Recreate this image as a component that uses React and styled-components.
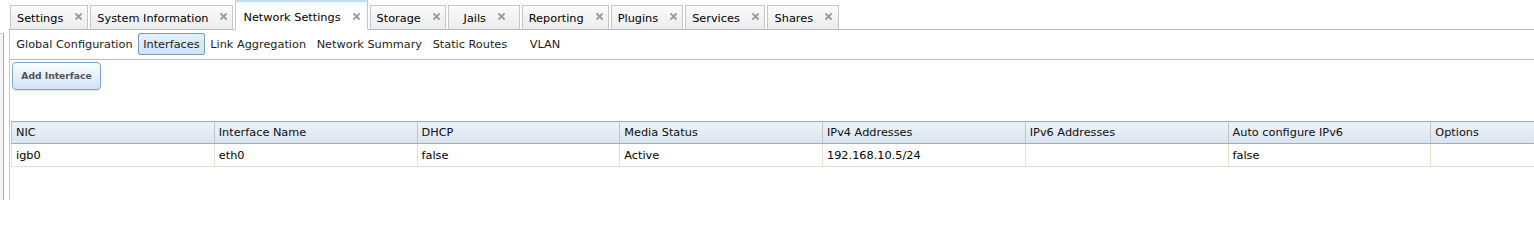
import styled, { createGlobalStyle } from 'styled-components';

const GlobalStyle = createGlobalStyle`
  html, body {
    margin: 0;
    padding: 0;
    background: #fff;
    overflow: hidden;
  }
  body {
    font-family: "DejaVu Sans", Verdana, sans-serif;
    font-size: 11.3px;
    color: #000;
  }
`;

const tabs = [
  'Settings',
  'System Information',
  'Network Settings',
  'Storage',
  'Jails',
  'Reporting',
  'Plugins',
  'Services',
  'Shares',
];

const subTabs = [
  { label: 'Global Configuration' },
  { label: 'Interfaces', active: true },
  { label: 'Link Aggregation' },
  { label: 'Network Summary' },
  { label: 'Static Routes' },
  { label: 'VLAN', offset: 12 },
];

const columns = [
  'NIC',
  'Interface Name',
  'DHCP',
  'Media Status',
  'IPv4 Addresses',
  'IPv6 Addresses',
  'Auto configure IPv6',
  'Options',
];

const rows = [['igb0', 'eth0', 'false', 'Active', '192.168.10.5/24', '', 'false', '']];

const CloseIcon = () => (
  <svg width="7" height="7" viewBox="0 0 7 7">
    <path d="M1 1 L6 6 M6 1 L1 6" stroke="#9a9a9a" strokeWidth="1.8" strokeLinecap="square" />
  </svg>
);

const App = () => {
  return (
    <Root>
      <GlobalStyle />
      <LeftStrip />
      <Main>
        <TabList>
          {tabs.map((t) => (
            <Tab key={t} $active={t === 'Network Settings'}>
              <span>{t}</span>
              <CloseIcon />
            </Tab>
          ))}
        </TabList>
        <Pane>
          <SubTabBar>
            {subTabs.map((s) => (
              <SubTab key={s.label} $active={s.active} $offset={s.offset || 0}>
                {s.label}
              </SubTab>
            ))}
          </SubTabBar>
          <Toolbar>
            <AddButton>Add Interface</AddButton>
          </Toolbar>
          <Grid>
            <colgroup>
              {columns.map((c) => (
                <col key={c} style={{ width: 202.75 }} />
              ))}
            </colgroup>
            <thead>
              <tr>
                {columns.map((c) => (
                  <HeadCell key={c}>{c}</HeadCell>
                ))}
              </tr>
            </thead>
            <tbody>
              {rows.map((r, i) => (
                <tr key={i}>
                  {r.map((v, j) => (
                    <Cell key={j}>{v}</Cell>
                  ))}
                </tr>
              ))}
            </tbody>
          </Grid>
        </Pane>
      </Main>
    </Root>
  );
};

export default App;

const Root = styled.div`
  display: flex;
  height: 200px;
  width: 1534px;
  overflow: hidden;
`;

const LeftStrip = styled.div`
  flex: 0 0 3px;
  margin-top: 33px;
  border-top: 1px solid #cfcfcf;
  border-right: 1px solid #a9a9a9;
  background: #f4f4f4;
`;

const Main = styled.div`
  flex: 1;
  display: flex;
  flex-direction: column;
  margin-left: 5px;
  min-width: 0;
`;

const TabList = styled.div`
  display: flex;
  align-items: flex-end;
  height: 29px;
  padding-left: 1px;
  position: relative;
  z-index: 1;
`;

const Tab = styled.div`
  display: flex;
  align-items: center;
  justify-content: center;
  gap: 12px;
  box-sizing: border-box;
  min-width: 72px;
  height: ${(p) => (p.$active ? '30px' : '24px')};
  margin-right: 2px;
  margin-bottom: ${(p) => (p.$active ? '-1px' : '0')};
  padding: ${(p) => (p.$active ? '5px 7px 0 7px' : '2px 5px 0 6px')};
  border: 1px solid #c6c6c6;
  border-bottom: ${(p) => (p.$active ? '1px solid #fff' : '0')};
  border-top: ${(p) => (p.$active ? '2px solid #c3ddf6' : '1px solid #c6c6c6')};
  background: ${(p) =>
    p.$active
      ? 'linear-gradient(#f3f8fd, #fff 8px)'
      : 'linear-gradient(#fafafa, #ececec)'};
  box-shadow: ${(p) => (p.$active ? 'none' : 'inset 0 1px 0 #fff')};
  white-space: nowrap;

  span {
    line-height: 1;
  }
  svg {
    margin-top: -4px;
  }
`;

const Pane = styled.div`
  flex: 1;
  border-top: 1px solid #b5bcc7;
  border-left: 1px solid #c8c8c8;
  display: flex;
  flex-direction: column;
`;

const SubTabBar = styled.div`
  display: flex;
  align-items: center;
  height: 29px;
  padding: 0 2px 0 1px;
  border-bottom: 1px solid #bcbcbc;
`;

const SubTab = styled.div`
  box-sizing: border-box;
  height: 22px;
  display: flex;
  align-items: center;
  padding: 0 4.3px;
  margin-left: ${(p) => p.$offset}px;
  margin-bottom: 1px;
  border: 1px solid ${(p) => (p.$active ? '#769dc0' : 'transparent')};
  border-radius: 2px;
  background: ${(p) => (p.$active ? 'linear-gradient(#e3effb, #cfe4f8)' : 'transparent')};
  color: #1c1c1c;
  white-space: nowrap;
`;

const Toolbar = styled.div`
  display: flex;
  padding: 2px 0 0 2px;
  height: 61px;
  box-sizing: border-box;
`;

const AddButton = styled.button`
  width: 89px;
  height: 28px;
  box-sizing: border-box;
  border: 1px solid #7fa7c9;
  border-radius: 4px;
  background: linear-gradient(#fbfdff, #e6f1fc 50%, #cfe4f8);
  box-shadow: inset 0 1px 0 #fff, 0 1px 1px rgba(0, 0, 0, 0.12);
  font-family: "DejaVu Sans", Verdana, sans-serif;
  font-weight: bold;
  font-size: 9.2px;
  color: #555;
  padding: 0 0 2px;
  cursor: pointer;
`;

const Grid = styled.table`
  margin-left: 1px;
  border-collapse: collapse;
  table-layout: fixed;
  width: 1622px;
`;

const HeadCell = styled.th`
  height: 21px;
  padding: 0 0 0 4px;
  text-align: left;
  font-weight: normal;
  color: #0e0e14;
  background: linear-gradient(#eef3f9, #d8e3ee);
  border: 1px solid #acacac;
  border-left-color: #c3c3c3;
  border-right-color: #c3c3c3;
  white-space: nowrap;
  overflow: hidden;
`;

const Cell = styled.td`
  height: 21px;
  padding: 1px 0 0 4px;
  color: #000;
  border-left: 1px solid #f1ddcb;
  border-right: 1px solid #f1ddcb;
  border-bottom: 1px solid #f1ddcb;
  white-space: nowrap;
`;
